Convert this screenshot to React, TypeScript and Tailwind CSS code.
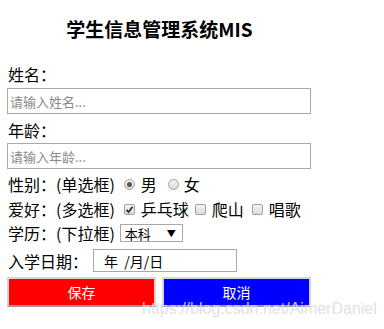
const cjk = { fontFamily: '"Noto Sans CJK SC", "Noto Sans", sans-serif' };

function Radio({ checked }: { checked?: boolean }) {
  return (
    <span className="inline-flex h-[11px] w-[11px] shrink-0 items-center justify-center rounded-full border border-[#a0a0a0] bg-gradient-to-b from-[#f4f4f4] to-[#dcdcdc]">
      {checked && <span className="h-[5px] w-[5px] rounded-full bg-[#555]" />}
    </span>
  );
}

function Checkbox({ checked }: { checked?: boolean }) {
  return (
    <span className="inline-flex h-[11px] w-[11px] shrink-0 items-center justify-center rounded-[2px] border border-[#a0a0a0] bg-gradient-to-b from-[#f4f4f4] to-[#dcdcdc]">
      {checked && (
        <svg width="9" height="9" viewBox="0 0 9 9">
          <path d="M1.5 4.8 L3.6 7 L7.6 1.8" fill="none" stroke="#333" strokeWidth="1.8" />
        </svg>
      )}
    </span>
  );
}

export default function App() {
  return (
    <div className="relative h-[329px] w-[384px] overflow-hidden bg-white text-black" style={cjk}>
      <div className="ml-[7px] flex w-[305px] flex-col">
        <h3 className="mt-[15px] text-center text-[19px] font-bold leading-[28px]">学生信息管理系统MIS</h3>

        <label className="mt-[20px] h-[22px] pl-px text-[16px] leading-[22px]">姓名：</label>
        <input
          className="mt-[3px] h-[26px] w-[304px] border border-[#a9a9a9] px-[2px] text-[13px] outline-none placeholder:text-[#8a8a8a]"
          placeholder="请输入姓名..."
          style={cjk}
        />

        <label className="mt-[5px] h-[22px] pl-px text-[16px] leading-[22px]">年龄：</label>
        <input
          className="mt-[2px] h-[26px] w-[304px] border border-[#a9a9a9] px-[2px] text-[13px] outline-none placeholder:text-[#8a8a8a]"
          placeholder="请输入年龄..."
          style={cjk}
        />

        <div className="mt-[4px] flex h-[22px] items-center pl-px text-[16px] leading-[22px]">
          <span>性别：(单选框)</span>
          <span className="ml-[9px] flex items-center gap-[6px]">
            <Radio checked />
            <span>男</span>
          </span>
          <span className="ml-[11px] flex items-center gap-[5px]">
            <Radio />
            <span>女</span>
          </span>
        </div>

        <div className="mt-[3px] flex h-[22px] items-center pl-px text-[16px] leading-[22px]">
          <span>爱好：(多选框)</span>
          <span className="ml-[9px] flex items-center gap-[6px]">
            <Checkbox checked />
            <span>乒乓球</span>
          </span>
          <span className="ml-[6px] flex items-center gap-[6px]">
            <Checkbox />
            <span>爬山</span>
          </span>
          <span className="ml-[8px] flex items-center gap-[6px]">
            <Checkbox />
            <span>唱歌</span>
          </span>
        </div>

        <div className="mt-[2px] flex h-[22px] items-center pl-px text-[16px] leading-[22px]">
          <span>学历：(下拉框)</span>
          <span className="ml-[5px] flex h-[18px] w-[63px] items-center justify-between border border-[#a9a9a9] bg-white pl-[4px] pr-[6px] text-[13px] leading-none">
            <span>本科</span>
            <span className="text-[9px]">▼</span>
          </span>
        </div>

        <div className="mt-[5px] flex h-[23px] items-center pl-px text-[16px] leading-[22px]">
          <span>入学日期：</span>
          <span className="ml-[5px] flex h-[23px] w-[144px] items-center border border-[#a9a9a9] pl-[10px] text-[14px] leading-none">
            年&nbsp;&nbsp;/月/日
          </span>
        </div>

        <div className="mt-[5px] flex gap-[6px]">
          <button className="h-[30px] w-[149px] border-2 border-[#d6d6d6] border-b-[#9a9a9a] bg-[#ff0000] text-[14px] text-white" style={cjk}>
            保存
          </button>
          <button className="h-[30px] w-[149px] border-2 border-[#d6d6d6] border-b-[#9a9a9a] bg-[#0000ff] text-[14px] text-white" style={cjk}>
            取消
          </button>
        </div>
      </div>

      <span
        className="pointer-events-none absolute left-[142px] top-[300px] text-[16px] leading-[18px] text-[#dedede]"
        style={{ fontFamily: '"Liberation Sans", Arial, sans-serif', opacity: 0.9 }}
      >
        https://blog.csdn.net/AimerDaniel
      </span>
    </div>
  );
}
